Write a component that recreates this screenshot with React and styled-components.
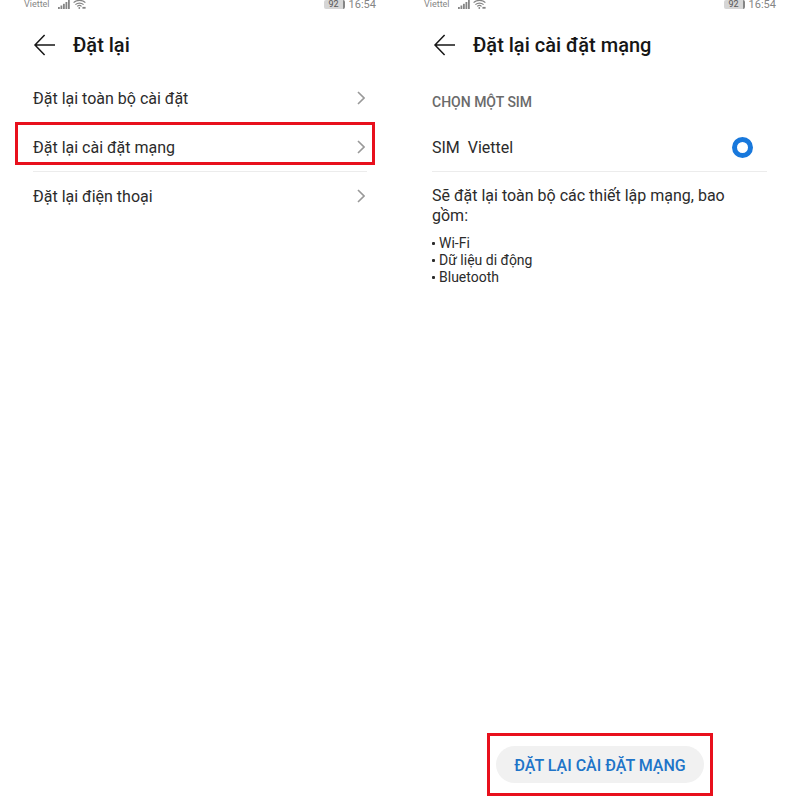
import React, { useState } from "react";
import styled, { createGlobalStyle } from "styled-components";

const colors = {
  text: "#2b2b2b",
  title: "#161616",
  muted: "#6a6a6a",
  status: "#858585",
  line: "#ececec",
  accent: "#1878dc",
  accentText: "#2074c8",
  mark: "#e8101c",
};

const resetOptions = [
  { key: "all", label: "Đặt lại toàn bộ cài đặt" },
  { key: "network", label: "Đặt lại cài đặt mạng", marked: true },
  { key: "phone", label: "Đặt lại điện thoại" },
];

const affected = ["Wi-Fi", "Dữ liệu di động", "Bluetooth"];

const SignalIcon = () => (
  <svg width="12" height="9" viewBox="0 0 12 9" fill="currentColor">
    <rect x="0" y="7" width="1.8" height="2" />
    <rect x="2.5" y="5.5" width="1.8" height="3.5" />
    <rect x="5" y="3.8" width="1.8" height="5.2" />
    <rect x="7.5" y="2" width="1.8" height="7" />
    <rect x="10" y="0" width="1.8" height="9" />
  </svg>
);

const WifiIcon = () => (
  <svg
    width="13"
    height="9"
    viewBox="0 0 13 9"
    fill="none"
    stroke="currentColor"
    strokeWidth="1.2"
  >
    <path d="M0.6 2.6C3.8 -0.4 9.2 -0.4 12.4 2.6" />
    <path d="M2.4 4.6C4.7 2.5 8.3 2.5 10.6 4.6" />
    <path d="M4.2 6.4C5.5 5.2 7.3 5.2 8.6 6.4" />
    <circle cx="6.3" cy="8" r="0.9" fill="currentColor" stroke="none" />
    <path d="M9.4 7.8H12.6" strokeWidth="1.8" />
  </svg>
);

const BackIcon = () => (
  <svg
    width="22"
    height="22"
    viewBox="0 0 22 22"
    fill="none"
    stroke="currentColor"
    strokeWidth="1.5"
  >
    <path d="M11.6 1L2 11L11.6 21M2 11H22" />
  </svg>
);

const ChevronIcon = () => (
  <svg
    width="8"
    height="14"
    viewBox="0 0 8 14"
    fill="none"
    stroke="currentColor"
    strokeWidth="1.6"
  >
    <path d="M1 1L7 7L1 13" />
  </svg>
);

const StatusBar = () => (
  <StyledStatus>
    <Carrier>Viettel</Carrier>
    <SignalIcon />
    <WifiIcon />
    <Battery>92</Battery>
    <Clock>16:54</Clock>
  </StyledStatus>
);

const ScreenHeader = ({ title }) => (
  <StyledHeader>
    <BackButton type="button" aria-label="Quay lại">
      <BackIcon />
    </BackButton>
    <Title>{title}</Title>
  </StyledHeader>
);

const App = () => {
  const [sim, setSim] = useState("viettel");

  return (
    <>
      <GlobalStyle />
      <Screens>
        <Screen>
          <StatusBar />
          <ScreenHeader title="Đặt lại" />
          <OptionList>
            {resetOptions.map((option) => (
              <OptionItem key={option.key} $marked={option.marked}>
                <OptionButton type="button">
                  {option.label}
                  <ChevronIcon />
                </OptionButton>
              </OptionItem>
            ))}
          </OptionList>
        </Screen>

        <Screen>
          <StatusBar />
          <ScreenHeader title="Đặt lại cài đặt mạng" />
          <Content>
            <SectionTitle>CHỌN MỘT SIM</SectionTitle>
            <SimRow>
              {"SIM  Viettel"}
              <Radio
                type="radio"
                name="sim"
                value="viettel"
                checked={sim === "viettel"}
                onChange={(e) => setSim(e.target.value)}
              />
            </SimRow>
            <Description>
              Sẽ đặt lại toàn bộ các thiết lập mạng, bao gồm:
            </Description>
            <Affected>
              {affected.map((name) => (
                <li key={name}>{name}</li>
              ))}
            </Affected>
          </Content>
          <Footer>
            <MarkFrame>
              <ResetButton type="button">ĐẶT LẠI CÀI ĐẶT MẠNG</ResetButton>
            </MarkFrame>
          </Footer>
        </Screen>
      </Screens>
    </>
  );
};

const GlobalStyle = createGlobalStyle`
  * {
    box-sizing: border-box;
  }
  body {
    margin: 0;
    background: #fff;
    color: ${colors.text};
    font-family: Roboto, "Noto Sans", sans-serif;
    font-size: 16px;
  }
  button {
    border: 0;
    background: none;
    color: inherit;
    font: inherit;
    cursor: pointer;
  }
`;

const Screens = styled.main`
  display: grid;
  grid-template-columns: 1fr 1fr;
  min-height: 100vh;
`;

const Screen = styled.section`
  display: flex;
  flex-direction: column;
  min-width: 0;
`;

const StyledStatus = styled.div`
  display: flex;
  align-items: center;
  height: 16px;
  padding: 0 24px 7px;
  color: ${colors.status};
  line-height: 9px;

  svg {
    flex: none;
    margin-right: 3px;
  }
`;

const Carrier = styled.span`
  margin-right: 8px;
  font-size: 9px;
`;

const Battery = styled.span`
  margin-left: auto;
  padding: 0 4px;
  border-right: 2px solid ${colors.status};
  border-radius: 2px;
  background: #d6d6d6;
  color: #555;
  font-size: 9px;
`;

const Clock = styled.span`
  margin-left: 4px;
  font-size: 11px;
`;

const StyledHeader = styled.header`
  display: flex;
  align-items: center;
  gap: 18px;
  height: 58px;
  padding: 0 33px;
  color: ${colors.title};
`;

const BackButton = styled.button`
  display: flex;
  padding: 0;
`;

const Title = styled.h1`
  margin: 0;
  font-size: 20px;
  font-weight: 500;
  line-height: 24px;
`;

const OptionList = styled.ul`
  margin: 0;
  padding: 0 33px;
  list-style: none;
`;

const OptionItem = styled.li`
  position: relative;
  border-bottom: 1px solid ${colors.line};

  &:last-child {
    border-bottom: 0;
  }

  &::after {
    content: ${(props) => (props.$marked ? '""' : "none")};
    position: absolute;
    inset: -1px -8px 6px -18px;
    border: 3px solid ${colors.mark};
    pointer-events: none;
  }
`;

const OptionButton = styled.button`
  display: flex;
  align-items: center;
  justify-content: space-between;
  width: 100%;
  height: 48px;
  padding: 0 2px 0 0;
  text-align: left;

  svg {
    color: #999;
  }
`;

const Content = styled.div`
  flex: 1;
  padding: 0 33px 24px 32px;
`;

const SectionTitle = styled.h2`
  margin: 0;
  padding: 18px 0 11px;
  color: ${colors.muted};
  font-size: 14px;
  font-weight: 500;
  line-height: 20px;
`;

const SimRow = styled.label`
  display: flex;
  align-items: center;
  justify-content: space-between;
  height: 49px;
  padding-right: 14px;
  border-bottom: 1px solid ${colors.line};
  white-space: pre;
`;

const Radio = styled.input`
  appearance: none;
  width: 21px;
  height: 21px;
  margin: 0;
  border: 2px solid #999;
  border-radius: 50%;

  &:checked {
    border: 5px solid ${colors.accent};
  }
`;

const Description = styled.p`
  margin: 14px 0 9px;
  padding-right: 14px;
  line-height: 20px;
`;

const Affected = styled.ul`
  margin: 0;
  padding: 0;
  font-size: 14px;
  line-height: 17px;
  list-style: none;

  li {
    display: flex;
    align-items: center;
    gap: 4px;
  }

  li::before {
    content: "";
    width: 3px;
    height: 3px;
    border-radius: 1px;
    background: ${colors.text};
  }
`;

const Footer = styled.footer`
  display: flex;
  justify-content: center;
  padding-bottom: 4px;
`;

const MarkFrame = styled.div`
  padding: 10px 6px;
  border: 3px solid ${colors.mark};
`;

const ResetButton = styled.button`
  height: 37px;
  padding: 1px 18px 0;
  border-radius: 20px;
  background: #f1f1f1;
  color: ${colors.accentText};
  font-weight: 500;
`;

export default App;
